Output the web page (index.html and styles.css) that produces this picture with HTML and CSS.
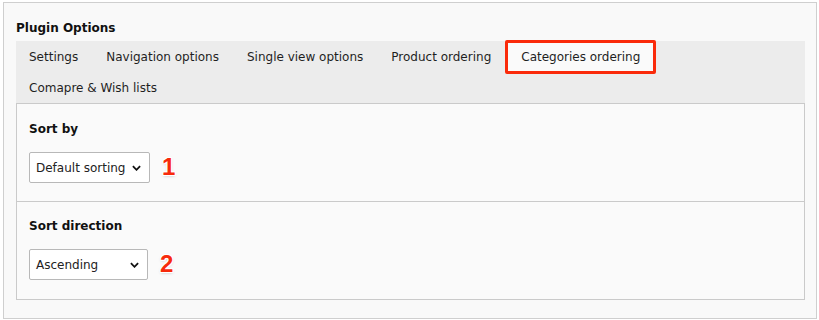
FILE: index.html
```html
<!DOCTYPE html>
<html>
<head>
<meta charset="utf-8">
<link rel="stylesheet" href="styles.css">
</head>
<body>
<div class="frame">
  <h2 class="title">Plugin Options</h2>
  <div class="tabs">
    <div class="tab-row">
      <span class="tab">Settings</span>
      <span class="tab">Navigation options</span>
      <span class="tab">Single view options</span>
      <span class="tab">Product ordering</span>
      <span class="tab active">Categories ordering</span>
    </div>
    <div class="tab-row">
      <span class="tab">Comapre &amp; Wish lists</span>
    </div>
  </div>
  <div class="panel">
    <div class="section">
      <div class="label">Sort by</div>
      <div class="field">
        <div class="select sel1"><span>Default sorting</span><svg class="chev" viewBox="0 0 10 6" width="9" height="6"><path d="M1 1 L5 5 L9 1" fill="none" stroke="#111" stroke-width="2"/></svg></div>
        <span class="num">1</span>
      </div>
    </div>
    <div class="section">
      <div class="label">Sort direction</div>
      <div class="field">
        <div class="select sel2"><span>Ascending</span><svg class="chev" viewBox="0 0 10 6" width="9" height="6"><path d="M1 1 L5 5 L9 1" fill="none" stroke="#111" stroke-width="2"/></svg></div>
        <span class="num">2</span>
      </div>
    </div>
  </div>
</div>
</body>
</html>
```
FILE: styles.css
```css
html, body {
  margin: 0;
  padding: 0;
  background: #ffffff;
}
body {
  font-family: "DejaVu Sans", Verdana, sans-serif;
  font-size: 12px;
  color: #1a1a1a;
  padding: 2px 3px 0 3px;
}
.frame {
  border: 1px solid #cfcfcf;
  background: #f9f9f9;
  padding: 0 11px 0 12px;
  box-sizing: border-box;
  width: 814px;
  height: 317px;
}
.title {
  margin: 0;
  padding-top: 18px;
  height: 38px;
  box-sizing: border-box;
  font-size: 12px;
  font-weight: bold;
  line-height: 14px;
  color: #111;
}
.tabs {
  background: #ececec;
  height: 62px;
  display: flex;
  flex-direction: column;
}
.tab-row {
  display: flex;
  height: 31px;
}
.tab {
  display: flex;
  align-items: center;
  padding: 0 15px 0 13px;
  line-height: 14px;
  color: #1f1f1f;
  white-space: nowrap;
}
.tab.active {
  background: #fafafa;
  border: 3px solid #fa2a0a;
  border-radius: 2px;
  margin-top: -1px;
  height: 34px;
  box-sizing: border-box;
  padding: 0 13px 0 13px;
  margin-left: -1px;
}
.panel {
  border: 1px solid #cacaca;
  background: #fafafa;
}
.section {
  height: 97px;
  box-sizing: border-box;
  padding: 18px 12px 0 12px;
}
.section + .section {
  border-top: 1px solid #cacaca;
  height: 98px;
  padding-top: 17px;
}
.label {
  font-weight: bold;
  line-height: 14px;
  color: #111;
}
.field {
  display: flex;
  align-items: center;
  margin-top: 16px;
  gap: 12px;
}
.select {
  height: 31px;
  box-sizing: border-box;
  border: 1px solid #b8b8b8;
  border-radius: 2px;
  background: #ffffff;
  display: flex;
  align-items: center;
  justify-content: space-between;
  padding: 0 8px 0 6px;
  color: #222;
  white-space: nowrap;
}
.sel1 { width: 121px; }
.sel2 { width: 119px; }
.chev { display: block; }
.num {
  font-family: "Liberation Sans", sans-serif;
  font-weight: bold;
  font-size: 24px;
  line-height: 24px;
  color: #f72a0c;
  margin-top: -2px;
  text-shadow: 1px 0 0 #fff, -1px 0 0 #fff, 0 1px 0 #fff, 0 -1px 0 #fff, 1px 1px 0 #fff, -1px -1px 0 #fff, 1px -1px 0 #fff, -1px 1px 0 #fff, 0 1px 3px rgba(0,0,0,0.25);
}
```
